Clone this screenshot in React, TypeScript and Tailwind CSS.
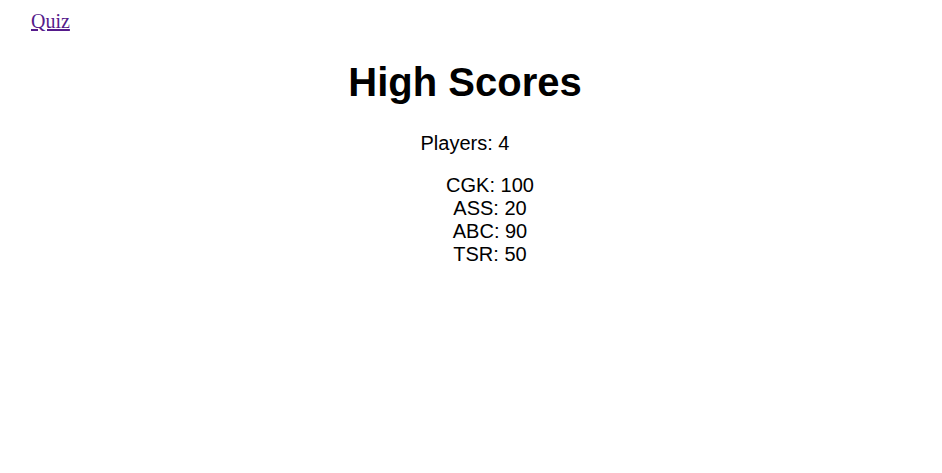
import React from 'react';

const scores = [
  { name: 'CGK', score: 100 },
  { name: 'ASS', score: 20 },
  { name: 'ABC', score: 90 },
  { name: 'TSR', score: 50 },
];

export default function App() {
  return (
    <div className="min-h-screen bg-white text-black font-['Liberation_Sans',Arial,sans-serif]">
      <div className="pl-[31px] pt-[10px]">
        <a href="#" className="font-['Liberation_Serif','Times_New_Roman',serif] text-[20px] leading-[23px] text-[#551a8b] underline">
          Quiz
        </a>
      </div>
      <div className="w-[930px] flex flex-col items-center">
        <h1 className="mt-[24px] text-[40px] leading-[46px] font-bold">High Scores</h1>
        <p className="mt-[27px] text-[20px] leading-[23px]">Players: 4</p>
        <ul className="mt-[19px] pl-[50px] text-[20px] leading-[23px] text-center">
          {scores.map((s) => (
            <li key={s.name}>
              {s.name}: {s.score}
            </li>
          ))}
        </ul>
      </div>
    </div>
  );
}
